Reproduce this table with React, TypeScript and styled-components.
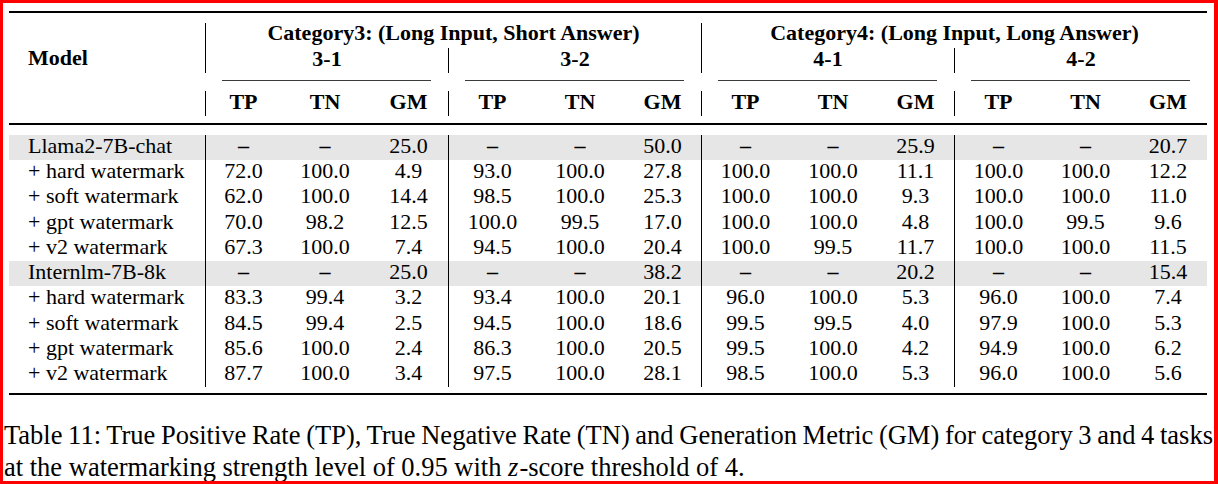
import React from "react";
import styled, { createGlobalStyle } from "styled-components";

const GlobalStyle = createGlobalStyle`
  html, body {
    margin: 0;
    padding: 0;
    background: #ffffff;
  }
`;

const COLS =
  "196px 76px 88px 79px 88px 88px 77px 88px 88px 77px 88px 87px 78px";

const Frame = styled.div`
  width: 1218px;
  height: 484px;
  box-sizing: border-box;
  border: 3px solid #ff0000;
  border-right-width: 4px;
  overflow: hidden;
  background: #ffffff;
  padding: 8px 7px 0 6px;
  font-family: "Liberation Serif", "Times New Roman", serif;
  color: #000000;
`;

const Table = styled.div`
  display: flex;
  flex-direction: column;
`;

const Rule = styled.div<{ $weight: number; $before?: number; $after?: number }>`
  height: ${(p) => p.$weight}px;
  background: #000000;
  margin-top: ${(p) => p.$before ?? 0}px;
  margin-bottom: ${(p) => p.$after ?? 0}px;
`;

const HeadRow = styled.div<{ $height: number; $line: number; $before?: number }>`
  display: grid;
  grid-template-columns: ${COLS};
  height: ${(p) => p.$height}px;
  margin-top: ${(p) => p.$before ?? 0}px;
  font-size: 22px;
  font-weight: 700;
  line-height: ${(p) => p.$line}px;
`;

const HeadCell = styled.div<{ $span?: number; $rule?: boolean }>`
  grid-column: span ${(p) => p.$span ?? 1};
  text-align: center;
  white-space: nowrap;
  border-left: ${(p) => (p.$rule ? "1px solid #000" : "none")};
`;

const ModelHead = styled.div`
  padding-left: 19px;
  line-height: 20.5px;
`;

const CmidCell = styled.div<{ $span: number }>`
  grid-column: span ${(p) => p.$span};
  position: relative;

  &::after {
    content: "";
    position: absolute;
    top: 7px;
    left: 17px;
    right: 17px;
    height: 1px;
    background: #3a3a3a;
  }
`;

const BodyRow = styled.div<{ $shade?: boolean }>`
  display: grid;
  grid-template-columns: ${COLS};
  height: 25.22px;
  background: ${(p) => (p.$shade ? "#e6e6e6" : "transparent")};
  font-size: 22px;
  line-height: 21.15px;
`;

const NameCell = styled.div`
  padding-left: 19px;
  white-space: nowrap;
`;

const ValueCell = styled.div<{ $rule?: boolean }>`
  text-align: center;
  white-space: nowrap;
  border-left: ${(p) => (p.$rule ? "1px solid #000" : "none")};
`;

const Dash = styled.span`
  font-weight: 700;
`;

const Caption = styled.div`
  margin: 25px -6px 0 -5px;
  font-size: 26.5px;
  line-height: 31.7px;
`;

const CaptionLine = styled.div<{ $justify?: boolean }>`
  text-align: ${(p) => (p.$justify ? "justify" : "left")};
  text-align-last: ${(p) => (p.$justify ? "justify" : "auto")};
  word-spacing: ${(p) => (p.$justify ? "-2px" : "0")};
  white-space: ${(p) => (p.$justify ? "normal" : "nowrap")};
`;

const MathVar = styled.i`
  font-style: italic;
  padding-right: 1px;
`;

type Entry = { name: string; base?: boolean; values: string[] };

const rows: Entry[] = [
  { name: "Llama2-7B-chat", base: true, values: ["–", "–", "25.0", "–", "–", "50.0", "–", "–", "25.9", "–", "–", "20.7"] },
  { name: "+ hard watermark", values: ["72.0", "100.0", "4.9", "93.0", "100.0", "27.8", "100.0", "100.0", "11.1", "100.0", "100.0", "12.2"] },
  { name: "+ soft watermark", values: ["62.0", "100.0", "14.4", "98.5", "100.0", "25.3", "100.0", "100.0", "9.3", "100.0", "100.0", "11.0"] },
  { name: "+ gpt watermark", values: ["70.0", "98.2", "12.5", "100.0", "99.5", "17.0", "100.0", "100.0", "4.8", "100.0", "99.5", "9.6"] },
  { name: "+ v2 watermark", values: ["67.3", "100.0", "7.4", "94.5", "100.0", "20.4", "100.0", "99.5", "11.7", "100.0", "100.0", "11.5"] },
  { name: "Internlm-7B-8k", base: true, values: ["–", "–", "25.0", "–", "–", "38.2", "–", "–", "20.2", "–", "–", "15.4"] },
  { name: "+ hard watermark", values: ["83.3", "99.4", "3.2", "93.4", "100.0", "20.1", "96.0", "100.0", "5.3", "96.0", "100.0", "7.4"] },
  { name: "+ soft watermark", values: ["84.5", "99.4", "2.5", "94.5", "100.0", "18.6", "99.5", "99.5", "4.0", "97.9", "100.0", "5.3"] },
  { name: "+ gpt watermark", values: ["85.6", "100.0", "2.4", "86.3", "100.0", "20.5", "99.5", "100.0", "4.2", "94.9", "100.0", "6.2"] },
  { name: "+ v2 watermark", values: ["87.7", "100.0", "3.4", "97.5", "100.0", "28.1", "98.5", "100.0", "5.3", "96.0", "100.0", "5.6"] },
];

const groups = ["3-1", "3-2", "4-1", "4-2"];
const metrics = ["TP", "TN", "GM"];

const App = (): JSX.Element => {
  return (
    <>
      <GlobalStyle />
      <Frame>
        <Table>
          <Rule $weight={2} />
          <HeadRow $height={25} $line={20} $before={10}>
            <div />
            <HeadCell $span={6} $rule>
              Category3: (Long Input, Short Answer)
            </HeadCell>
            <HeadCell $span={6} $rule>
              Category4: (Long Input, Long Answer)
            </HeadCell>
          </HeadRow>
          <HeadRow $height={25} $line={22.5}>
            <ModelHead>Model</ModelHead>
            {groups.map((g) => (
              <HeadCell key={g} $span={3} $rule>
                {g}
              </HeadCell>
            ))}
          </HeadRow>
          <HeadRow $height={18} $line={18}>
            <div />
            {groups.map((g) => (
              <CmidCell key={g} $span={3} />
            ))}
          </HeadRow>
          <HeadRow $height={25} $line={21.15}>
            <div />
            {groups.map((g) =>
              metrics.map((m, i) => (
                <HeadCell key={g + m} $rule={i === 0}>
                  {m}
                </HeadCell>
              ))
            )}
          </HeadRow>
          <Rule $weight={2} $before={7} $after={10} />
          {rows.map((r, ri) => (
            <BodyRow key={ri} $shade={r.base}>
              <NameCell>{r.name}</NameCell>
              {r.values.map((v, vi) => (
                <ValueCell key={vi} $rule={vi % 3 === 0}>
                  {v === "–" ? <Dash>{v}</Dash> : v}
                </ValueCell>
              ))}
            </BodyRow>
          ))}
          <Rule $weight={2} $before={6} />
        </Table>
        <Caption>
          <CaptionLine $justify>
            Table 11: True Positive Rate (TP), True Negative Rate (TN) and
            Generation Metric (GM) for category 3 and 4 tasks
          </CaptionLine>
          <CaptionLine>
            at the watermarking strength level of 0.95 with <MathVar>z</MathVar>
            -score threshold of 4.
          </CaptionLine>
        </Caption>
      </Frame>
    </>
  );
};

export default App;
